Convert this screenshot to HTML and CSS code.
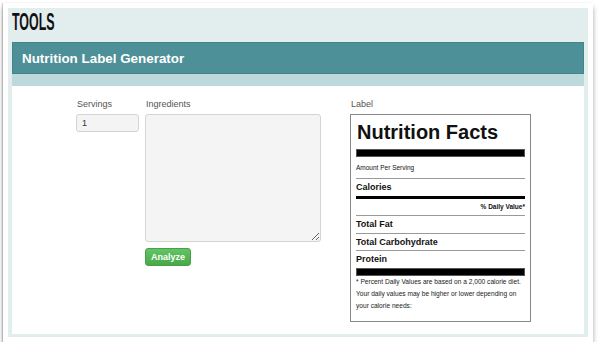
FILE: index.html
```html
<!DOCTYPE html>
<html lang="en">
<head>
    <meta charset="UTF-8">
    <meta name="viewport" content="width=device-width, initial-scale=1.0">
    <title>Tools - Nutrition Label Generator</title>
    <link rel="stylesheet" href="styles.css">
</head>
<body>
    <div class="frame">
        <div class="panel">
            <h1 class="page-title"><span>TOOLS</span></h1>
            <div class="tool-header">
                <h2>Nutrition Label Generator</h2>
            </div>
            <div class="tool-strip"></div>
            <div class="tool-body">
                <div class="field servings">
                    <label for="servings">Servings</label>
                    <input type="text" id="servings" value="1">
                </div>
                <div class="field ingredients">
                    <label for="ingredients">Ingredients</label>
                    <textarea id="ingredients"></textarea>
                    <button class="analyze">Analyze</button>
                </div>
                <div class="field label-col">
                    <label>Label</label>
                    <div class="nf">
                        <div class="nf-title">Nutrition Facts</div>
                        <div class="nf-bar"></div>
                        <div class="nf-small">Amount Per Serving</div>
                        <div class="nf-row calories">Calories</div>
                        <div class="nf-dv">% Daily Value*</div>
                        <div class="nf-row">Total Fat</div>
                        <div class="nf-row">Total Carbohydrate</div>
                        <div class="nf-row last">Protein</div>
                        <div class="nf-bar"></div>
                        <p class="nf-note">* Percent Daily Values are based on a 2,000 calorie diet. Your daily values may be higher or lower depending on your calorie needs:</p>
                    </div>
                </div>
            </div>
        </div>
    </div>
</body>
</html>
```

FILE: styles.css
```css
body {
    margin: 0;
    background: #fff;
    font-family: "Liberation Sans", Arial, sans-serif;
}
.frame {
    margin: 3px 0 0 3px;
    width: 590px;
    height: 339px;
    padding: 5px;
    box-sizing: border-box;
    background: #fff;
    box-shadow: 0 4px 5px rgba(0, 0, 0, 0.35), -1px 0 1px rgba(0, 0, 0, 0.15);
}
.panel {
    height: 100%;
    background: #e2eeee;
    padding: 0 4px 3px;
    box-sizing: border-box;
    display: flex;
    flex-direction: column;
}
.page-title {
    margin: 0;
    height: 34px;
    font-family: "Liberation Sans", Arial, sans-serif;
    font-weight: bold;
    font-size: 23px;
    line-height: 29px;
    color: #111;
}
.page-title span {
    display: inline-block;
    transform: scaleX(0.54);
    transform-origin: left center;
}
.tool-header {
    background: #4e9097;
    border: 1px solid #43848b;
    height: 32px;
    box-sizing: border-box;
    padding-left: 9px;
}
.tool-header h2 {
    margin: 0;
    color: #fff;
    font-size: 13.4px;
    line-height: 31px;
    font-weight: bold;
}
.tool-strip {
    height: 12px;
    background: #bdd9dc;
}
.tool-body {
    flex: 1;
    background: #fff;
    display: flex;
    padding: 12px 0 0 64px;
    font-size: 9px;
}
.field label {
    display: block;
    color: #555;
    font-size: 9px;
    line-height: 12px;
    margin: 0 0 4px 1px;
}
.servings {
    width: 63px;
    margin-right: 6px;
}
.servings input {
    width: 63px;
    height: 18px;
    box-sizing: border-box;
    border: 1px solid #d4d4d4;
    border-radius: 3px;
    background: #f4f4f4;
    font-family: inherit;
    font-size: 9px;
    padding: 0 5px;
    color: #333;
}
.ingredients {
    width: 176px;
    margin-right: 29px;
}
.ingredients textarea {
    display: block;
    width: 176px;
    height: 128px;
    box-sizing: border-box;
    border: 1px solid #d4d4d4;
    border-radius: 3px;
    background: #f4f4f4;
    resize: vertical;
}
.analyze {
    margin-top: 6px;
    width: 46px;
    height: 18px;
    border: 1px solid #4a9e4a;
    border-radius: 3px;
    background: linear-gradient(#62c462, #4aa84a);
    color: #fff;
    font-family: inherit;
    font-weight: bold;
    font-size: 9px;
    padding: 0;
}
.label-col {
    width: 181px;
}
.nf {
    border: 1px solid #888;
    height: 208px;
    box-sizing: border-box;
    padding: 6px 5px 0;
    color: #111;
}
.nf-title {
    font-size: 20px;
    font-weight: bold;
    line-height: 22px;
    margin-left: 1px;
}
.nf-bar {
    height: 6px;
    background: #000;
    border: 1px solid #555;
    margin-top: 6px;
}
.nf-small {
    font-size: 6.5px;
    line-height: 21px;
    border-bottom: 1px solid #999;
}
.nf-row {
    font-size: 9px;
    font-weight: bold;
    line-height: 16.5px;
    border-bottom: 1px solid #999;
}
.nf-row.calories {
    border-bottom: 3px solid #000;
}
.nf-row.last {
    border-bottom: 0;
}
.nf-row.last + .nf-bar {
    margin-top: 0;
}
.nf-dv {
    font-size: 6.5px;
    font-weight: bold;
    text-align: right;
    line-height: 16.5px;
    border-bottom: 1px solid #999;
}
.nf-note {
    margin: 0;
    font-size: 6.6px;
    line-height: 12px;
    color: #222;
}
```
